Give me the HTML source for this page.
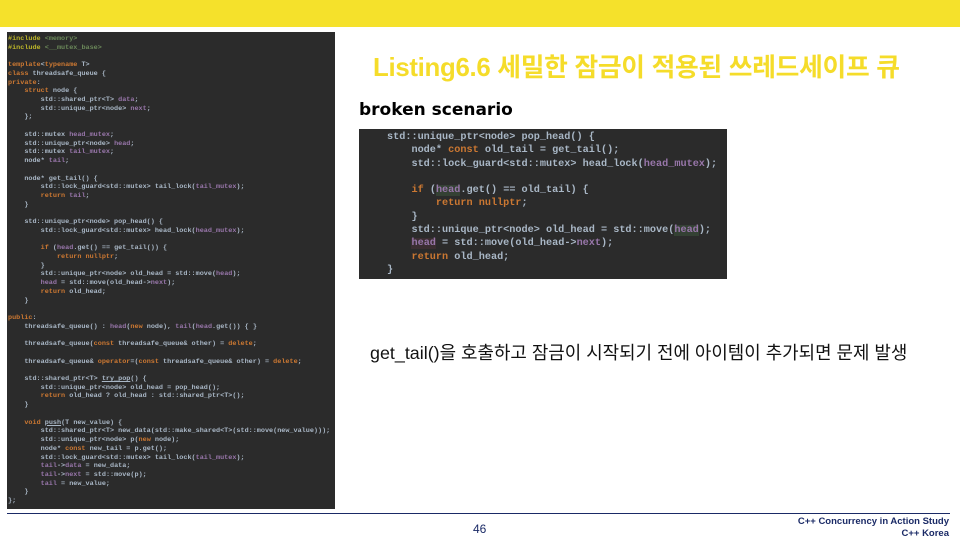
<!DOCTYPE html>
<html><head><meta charset="utf-8"><style>
body{margin:0;width:960px;height:540px;background:#fff;position:relative;overflow:hidden;font-family:"Liberation Sans","Noto Sans CJK KR",sans-serif}
.top{position:absolute;left:0;top:0;width:960px;height:27px;background:#f5e12b}
.code{position:absolute;left:7px;top:32px;width:328px;height:477px;background:#2b2b2b;box-sizing:border-box;padding:3px 0 0 1px;font-family:"Liberation Mono",monospace;font-size:6.8px;line-height:8.72px;color:#a9b7c6;white-space:pre;overflow:hidden;font-weight:bold}
.k{color:#cc7832;font-weight:bold}.p{color:#9876aa}.d{color:#bbb529}.g{color:#6a8759}
.title{position:absolute;left:373px;top:47px;font-size:25.8px;font-weight:bold;color:#f5dc2a;white-space:nowrap;letter-spacing:-0.3px}
.sub{position:absolute;left:359px;top:100px;font-family:"DejaVu Sans",sans-serif;font-size:17px;font-weight:bold;color:#000}
.snip{position:absolute;left:359px;top:129px;width:368px;height:150px;background:#2b2b2b;box-sizing:border-box;padding:2px 0 0 28px;font-family:"Liberation Mono",monospace;font-size:10.2px;line-height:13.3px;color:#a9b7c6;white-space:pre;font-weight:bold;overflow:hidden}
.h{background:#344134}.hr{background:#3b2e32}
.desc{position:absolute;left:370px;top:339px;font-size:17.9px;color:#111;white-space:nowrap}
.line{position:absolute;left:7px;top:513px;width:943px;height:1px;background:#1a2a66}
.num{position:absolute;left:473px;top:522px;font-size:12px;color:#1a2a66}
.foot{position:absolute;right:11px;top:516px;text-align:right;font-size:9.5px;font-weight:bold;color:#1a2a66;line-height:12px}
</style></head><body>
<div class="top"></div>
<div class="code"><span class="d">#include</span> <span class="g">&lt;memory&gt;</span>
<span class="d">#include</span> <span class="g">&lt;__mutex_base&gt;</span>

<span class="k">template</span>&lt;<span class="k">typename</span> T&gt;
<span class="k">class</span> threadsafe_queue {
<span class="k">private</span>:
    <span class="k">struct</span> node {
        std::shared_ptr&lt;T&gt; <span class="p">data</span>;
        std::unique_ptr&lt;node&gt; <span class="p">next</span>;
    };

    std::mutex <span class="p">head_mutex</span>;
    std::unique_ptr&lt;node&gt; <span class="p">head</span>;
    std::mutex <span class="p">tail_mutex</span>;
    node* <span class="p">tail</span>;

    node* get_tail() {
        std::lock_guard&lt;std::mutex&gt; tail_lock(<span class="p">tail_mutex</span>);
        <span class="k">return</span> <span class="p">tail</span>;
    }

    std::unique_ptr&lt;node&gt; pop_head() {
        std::lock_guard&lt;std::mutex&gt; head_lock(<span class="p">head_mutex</span>);

        <span class="k">if</span> (<span class="p">head</span>.get() == get_tail()) {
            <span class="k">return nullptr</span>;
        }
        std::unique_ptr&lt;node&gt; old_head = std::move(<span class="p">head</span>);
        <span class="p">head</span> = std::move(old_head-&gt;<span class="p">next</span>);
        <span class="k">return</span> old_head;
    }

<span class="k">public</span>:
    threadsafe_queue() : <span class="p">head</span>(<span class="k">new</span> node), <span class="p">tail</span>(<span class="p">head</span>.get()) { }

    threadsafe_queue(<span class="k">const</span> threadsafe_queue&amp; other) = <span class="k">delete</span>;

    threadsafe_queue&amp; <span class="k">operator</span>=(<span class="k">const</span> threadsafe_queue&amp; other) = <span class="k">delete</span>;

    std::shared_ptr&lt;T&gt; <u>try_pop</u>() {
        std::unique_ptr&lt;node&gt; old_head = pop_head();
        <span class="k">return</span> old_head ? old_head : std::shared_ptr&lt;T&gt;();
    }

    <span class="k">void</span> <u>push</u>(T new_value) {
        std::shared_ptr&lt;T&gt; new_data(std::make_shared&lt;T&gt;(std::move(new_value)));
        std::unique_ptr&lt;node&gt; p(<span class="k">new</span> node);
        node* <span class="k">const</span> new_tail = p.get();
        std::lock_guard&lt;std::mutex&gt; tail_lock(<span class="p">tail_mutex</span>);
        <span class="p">tail</span>-&gt;<span class="p">data</span> = new_data;
        <span class="p">tail</span>-&gt;<span class="p">next</span> = std::move(p);
        <span class="p">tail</span> = new_value;
    }
};</div>
<div class="title">Listing6.6 세밀한 잠금이 적용된 쓰레드세이프 큐</div>
<div class="sub">broken scenario</div>
<div class="snip">std::unique_ptr&lt;node&gt; pop_head() {
    node* <span class="k">const</span> old_tail = get_tail();
    std::lock_guard&lt;std::mutex&gt; head_lock(<span class="p">head_mutex</span>);

    <span class="k">if</span> (<span class="p h">head</span>.get() == old_tail) {
        <span class="k">return nullptr</span>;
    }
    std::unique_ptr&lt;node&gt; old_head = std::move(<span class="p h">head</span>);
    <span class="p hr">head</span> = std::move(old_head-&gt;<span class="p">next</span>);
    <span class="k">return</span> old_head;
}</div>
<div class="desc">get_tail()을 호출하고 잠금이 시작되기 전에 아이템이 추가되면 문제 발생</div>
<div class="line"></div>
<div class="num">46</div>
<div class="foot">C++ Concurrency in Action Study<br>C++ Korea</div>
</body></html>
